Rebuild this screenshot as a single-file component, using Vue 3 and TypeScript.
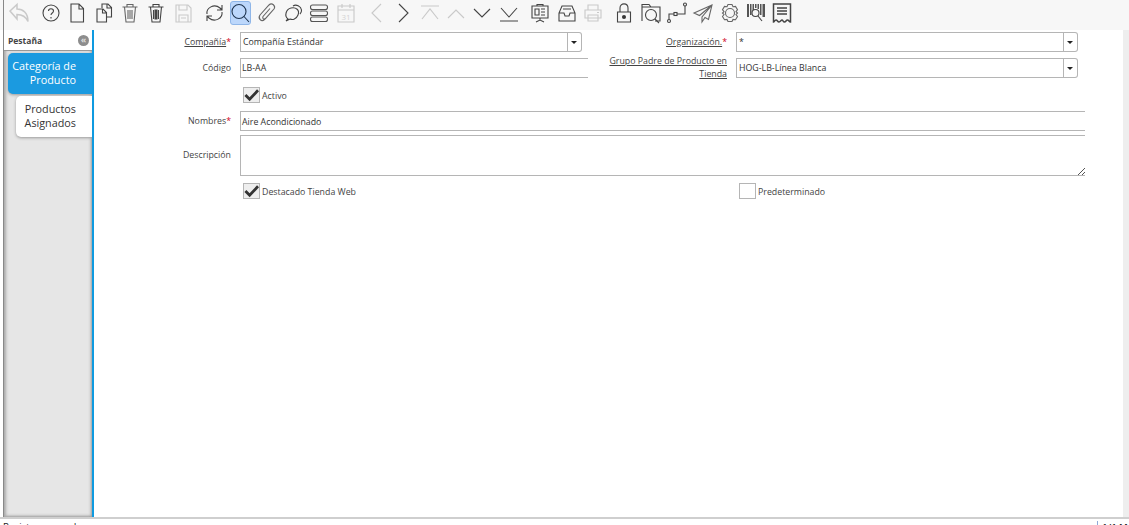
<template>
  <div class="window">
    <header class="toolbar">
      <button
        v-for="tool in tools"
        :key="tool.name"
        class="tool"
        :class="{ active: tool.active, off: tool.off, gap: tool.gap }"
        :title="tool.name"
      >
        <svg viewBox="0 0 24 24" width="24" height="24" v-html="tool.svg"></svg>
      </button>
    </header>

    <div class="main">
      <aside class="side">
        <div class="side-head">
          <span>Pestaña</span>
          <i class="collapse">«</i>
        </div>
        <div class="side-body">
          <div class="tab current">Categoría de<br />Producto</div>
          <div class="tab">Productos<br />Asignados</div>
        </div>
      </aside>

      <main class="content">
        <form class="form">
          <label class="lbl"><u>Compañía</u><em>*</em></label>
          <div class="combo">
            <span class="val">Compañía Estándar</span>
            <span class="arrow"></span>
          </div>
          <label class="lbl"><u>Organización.</u><em>*</em></label>
          <div class="combo">
            <span class="val">*</span>
            <span class="arrow"></span>
          </div>

          <label class="lbl">Código</label>
          <div class="field">LB-AA</div>
          <label class="lbl two"><u>Grupo Padre de Producto en Tienda</u></label>
          <div class="combo">
            <span class="val">HOG-LB-Línea Blanca</span>
            <span class="arrow"></span>
          </div>

          <div class="check span3">
            <span class="box">
              <svg viewBox="0 0 16 16" width="16" height="16"><path d="M1.500 8 6 12.500 15 3" fill="none" stroke="#333" stroke-width="3" /></svg>
            </span>
            <span class="cap">Activo</span>
          </div>

          <label class="lbl low">Nombres<em>*</em></label>
          <div class="field wide low">Aire Acondicionado</div>

          <label class="lbl desc">Descripción</label>
          <div class="field wide area">
            <svg class="grip" viewBox="0 0 8 8" width="8" height="8"><path d="M1 8 8 1M5 8 8 5" stroke="#555" stroke-width="1" /></svg>
          </div>

          <div class="check span2">
            <span class="box">
              <svg viewBox="0 0 16 16" width="16" height="16"><path d="M1.500 8 6 12.500 15 3" fill="none" stroke="#333" stroke-width="3" /></svg>
            </span>
            <span class="cap">Destacado Tienda Web</span>
          </div>
          <div class="check last">
            <span class="box empty"></span>
            <span class="cap">Predeterminado</span>
          </div>
        </form>
        <div class="gutter"></div>
      </main>
    </div>

    <footer class="status">
      <span>Registros cargados</span>
      <span class="count">1/1 M</span>
    </footer>
  </div>
</template>

<script setup lang="ts">
interface Tool {
  name: string
  svg: string
  off?: boolean
  active?: boolean
  gap?: boolean
}

const tools: Tool[] = [
  { name: 'Deshacer', off: true, svg: '<path d="M3 10 10 3.500v4.500c6 0 11 4 11 12.500-2-4.500-5-7-11-7V18z" stroke-width="1.500"/>' },
  { name: 'Ayuda', gap: true, svg: '<circle cx="12" cy="12" r="8"/><path d="M9.500 10c0-3 5-3 5 0 0 2-2.500 2-2.500 4M12 16v1.500"/>' },
  { name: 'Nuevo', svg: '<path d="M6 3h8l4.500 4.500V21H6zM14 3v5h4.500"/>' },
  { name: 'Copiar', svg: '<path d="M10 7V3h6l3.500 3.500V16H15M15 3v4h4M5 8h6l3.500 3.500V21H5zM10.500 8v4h4"/>' },
  { name: 'Eliminar', svg: '<path d="M4.500 6h15M9 6V3.500h6V6M6.500 6 8 21h8l1.500-15M10 9v9M12 9v9M14 9v9" stroke="#666"/>' },
  { name: 'Eliminar selección', svg: '<path d="M4.500 6h15M9 6V3.500h6V6M6.500 6 8 21h8l1.500-15M9.500 9v9M14.500 9v9"/><path d="M11 9h2v9h-2z" fill="#444"/>' },
  { name: 'Guardar', off: true, svg: '<path d="M5 4h12l3 3v14H5zM8 4v5h8V4M8 21v-7h9v7M10 17h5"/>' },
  { name: 'Refrescar', gap: true, svg: '<path d="M5 13c-1-6 7-11 13-6l1.500 1.500M20 11c1 6-7 11-13 6l-1.500-1.500M20 4v5h-5M5 20v-5h5"/>' },
  { name: 'Buscar', active: true, svg: '<circle cx="11" cy="10.500" r="7"/><path d="M16 15.500 21 21"/>' },
  { name: 'Adjunto', svg: '<path d="M18 9 9.500 18.500c-3 3-7-1-4.500-4.500L14 4c3-3 7 1 5 4l-8.500 9.500c-1.500 1.500-3.500 0-2.500-2l7-8" stroke="#666"/>' },
  { name: 'Chat', svg: '<path d="M7 18c-4-3-2-10 3-11s9 2 7 7-6 5-8 4l-4 2z"/><path d="M12 5c3-2 8 0 8.500 4 .2 2-.5 3-1.500 4"/>' },
  { name: 'Detalle', svg: '<rect x="3.500" y="4" width="17" height="4.500" rx="2" stroke="#555"/><rect x="3.500" y="10" width="17" height="4.500" rx="2" stroke="#555"/><rect x="3.500" y="16" width="17" height="4.500" rx="2" stroke="#555"/>' },
  { name: 'Calendario', off: true, svg: '<path d="M4 5h16v16H4zM4 9h16M8 3v4M16 3v4"/><text x="12" y="19" font-size="8" font-family="Open Sans" text-anchor="middle" stroke="none" fill="#666">31</text>' },
  { name: 'Anterior', off: true, gap: true, svg: '<path d="M16 3 7 12l9 9"/>' },
  { name: 'Siguiente', svg: '<path d="M8 3l9 9-9 9"/>' },
  { name: 'Primero', off: true, svg: '<path d="M3 5h18M4 18 12 8l8 10"/>' },
  { name: 'Subir', off: true, svg: '<path d="M4 17l8-8 8 8"/>' },
  { name: 'Bajar', svg: '<path d="M4 8l8 8 8-8"/>' },
  { name: 'Último', svg: '<path d="M4 7l8 9 8-9M3 20h18"/>' },
  { name: 'Informe', gap: true, svg: '<path d="M4 5h16v12H4zM9 5V3.500h6V5M12 17v2M8 21l4-2 4 2M7 8h4v6H7zM13 8h4M13 11h4M13 14h4"/>' },
  { name: 'Archivo', svg: '<path d="M7 5h10l3 7v8H4v-8zM4 12h5l1 3h4l1-3h5M8 8h8"/>' },
  { name: 'Imprimir', off: true, svg: '<path d="M7 9V4h10v5M4 9h16v8H4zM7 14h10v6H7zM16 11.500h2"/>' },
  { name: 'Bloquear', gap: true, svg: '<path d="M5.500 11h13v10h-13zM8 11V7c0-5.500 8-5.500 8 0v4"/><circle cx="12" cy="16" r="1.500" fill="#333"/>' },
  { name: 'Zoom', svg: '<path d="M3 20V3.500h7l2 2.500h9v14H16M3 6h9"/><circle cx="12" cy="14" r="5.500"/><path d="M16 18l4 4"/>' },
  { name: 'Flujo', svg: '<circle cx="4" cy="20" r="1.500"/><circle cx="20" cy="3.500" r="1.500"/><rect x="9" y="11.500" width="3" height="3"/><path d="M4 18.500V13h5M12 13h8V5"/>' },
  { name: 'Enviar', svg: '<path d="M21 4 3 12l5.500 2.500L21 4 11 16v5l3-4.500 3.500 2z" stroke="#666"/>' },
  { name: 'Preferencias', svg: '<circle cx="12" cy="12" r="4.500" stroke="#666"/><path stroke="#666" d="M10 3.500h4l1 2.200 2.500-.3 2 3.200-1.500 2L19.500 12l-1.500 1.500 1.500 2-2 3.200-2.500-.3-1 2.100h-4l-1-2.100-2.500.3-2-3.200 1.500-2L4.500 12 6 10.600l-1.500-2 2-3.200 2.500.3z"/>' },
  { name: 'Código de barras', svg: '<path d="M3 3h2v13H3zM6 3h1.500v11H6zM8.500 3h1.500v6H8.500zM11 3h1.500v4H11zM13.500 3h1.500v5h-1.500zM16 3h1.500v11H16zM18.500 3H21v13h-2.500z" fill="#555" stroke="none"/><circle cx="11.500" cy="12" r="3.500"/><path d="M14 15l4 5"/>' },
  { name: 'Recibo', svg: '<path d="M3.500 3h17v18c-1.500 0-1.500-2-3-2s-1.500 2-3 2-1.500-2-2.500-2-1.500 2-3 2-1.500-2-3-2-1.500 2-2.500 2zM7 7h10M7 10h10M7 13h10" stroke-width="1.500"/>' },
]
</script>

<style scoped>
.window {
  width: 1129px;
  height: 525px;
  display: flex;
  flex-direction: column;
  overflow: hidden;
  background: #fff;
  font-family: 'Open Sans', 'Liberation Sans', sans-serif;
  font-size: 8.800px;
  color: #333;
}

.toolbar {
  height: 30px;
  flex: none;
  display: flex;
  align-items: flex-start;
  padding: 1px 0 0 3px;
  background: #f7f7f7;
  box-sizing: border-box;
}

.toolbar::before {
  content: '';
  width: 1px;
  height: 30px;
  margin: -1px 2.300px 0 0;
  background: #888;
  flex: none;
}

.tool {
  width: 26.300px;
  height: 24px;
  flex: none;
  padding: 0;
  border: 1px solid transparent;
  border-radius: 3px;
  background: none;
  display: flex;
  align-items: center;
  justify-content: center;
  box-sizing: border-box;
}

.tool svg {
  flex: none;
  fill: none;
  stroke: #444;
  stroke-width: 1.100;
}

.tool.gap {
  margin-left: 5.300px;
}

.tool.off svg {
  opacity: 0.25;
}

.tool.active {
  width: 21px;
  margin: 0 2.650px;
  background: #bcd7fb;
  border-color: #8fb6e8;
}

.tool.active svg {
  stroke: #1f3550;
}

.main {
  height: 487px;
  flex: none;
  display: flex;
  border-bottom: 2px solid #cfcfcf;
  box-sizing: content-box;
}

.side {
  width: 88px;
  margin-left: 3px;
  flex: none;
  display: flex;
  flex-direction: column;
  border-left: 1px solid #888;
  box-sizing: content-box;
}

.side-head {
  height: 20px;
  display: flex;
  align-items: center;
  justify-content: space-between;
  padding: 0 3px 0 4px;
  font-size: 8.500px;
  font-weight: 700;
  color: #444;
  background: #fff;
  border-bottom: 1px solid #999;
}

.collapse {
  width: 11px;
  height: 11px;
  border-radius: 50%;
  background: #8d8d8d;
  color: #ddd;
  font-style: normal;
  font-size: 9px;
  line-height: 10px;
  text-align: center;
}

.side-body {
  flex: 1;
  display: flex;
  flex-direction: column;
  align-items: flex-end;
  padding-top: 2px;
  background: #e6e6e6;
  box-shadow: inset 3px 0 3px -1px #aaa, inset -3px -3px 3px -2px #999;
}

.tab {
  width: 76px;
  height: 41px;
  box-sizing: border-box;
  padding: 6px 16px 0 0;
  border-radius: 5px 0 0 5px;
  background: #fff;
  font-size: 10.800px;
  line-height: 14px;
  text-align: right;
  white-space: nowrap;
  color: #333;
  box-shadow: 0 1px 3px #999;
}

.tab.current {
  width: 84px;
  background: #1b9ae0;
  color: #fff;
  margin-bottom: 2px;
  font-weight: 500;
}

.content {
  flex: 1;
  display: flex;
  border-left: 2px solid #0e9ae0;
}

.form {
  flex: none;
  align-self: flex-start;
  display: grid;
  grid-template-columns: 137px 348px 130px 349px;
  grid-template-rows: 26px 29px 24px 24px 48px 16px;
  column-gap: 9px;
  padding-top: 2px;
}

.lbl {
  display: flex;
  align-items: center;
  justify-content: flex-end;
  height: 20px;
  text-align: right;
  line-height: 13px;
  color: #444;
  white-space: nowrap;
}

.lbl.two {
  white-space: normal;
}

.lbl.desc {
  align-items: flex-start;
  padding-top: 14px;
  box-sizing: border-box;
}

.lbl em {
  color: #d0021b;
  font-style: normal;
}

.low {
  padding-top: 1px;
  box-sizing: border-box;
}

.combo,
.field {
  display: flex;
  align-items: center;
  height: 20px;
  box-sizing: border-box;
  padding-left: 1px;
  border: 1px solid #b5b5b5;
  border-right: 0;
  background: #fff;
  color: #333;
}

.combo {
  width: 328px;
  border-right: 1px solid #b5b5b5;
  position: relative;
  padding-left: 2px;
}

.val {
  flex: 1;
}

.arrow {
  position: absolute;
  right: -15px;
  top: -1px;
  width: 14px;
  height: 20px;
  box-sizing: border-box;
  border: 1px solid #b5b5b5;
  border-left: 0;
  border-radius: 0 3px 3px 0;
  background: #fff;
}

.arrow::after {
  content: '';
  position: absolute;
  left: 3px;
  top: 8px;
  border: 3px solid transparent;
  border-top: 3px solid #222;
}

.field.wide {
  grid-column: 2 / 5;
}

.field.area {
  height: 41px;
  position: relative;
}

.grip {
  position: absolute;
  right: 0;
  bottom: 0;
}

.check {
  display: flex;
  align-items: center;
  gap: 2px;
  height: 16px;
  color: #444;
}

.cap {
  padding-top: 2px;
}

.span3 {
  grid-column: 2 / 5;
  margin-left: 3px;
}

.span2 {
  grid-column: 2 / 4;
  margin-left: 3px;
}

.last {
  margin-left: 3px;
}

.box {
  width: 17px;
  height: 16px;
  flex: none;
  box-sizing: border-box;
  border: 1px solid #b5b5b5;
  background: #eee;
  display: flex;
  align-items: center;
  justify-content: center;
}

.box.empty {
  background: #fff;
}

.gutter {
  width: 6px;
  margin-left: auto;
  background: #eee;
}

.status {
  height: 6px;
  flex: none;
  display: flex;
  justify-content: space-between;
  align-items: flex-start;
  padding: 2px 0 0 3px;
  font-size: 9.500px;
  line-height: 12px;
  color: #222;
  overflow: hidden;
  box-sizing: border-box;
}

.count {
  border-left: 1px solid #8fa8d8;
  padding-left: 4px;
  font-weight: 600;
  width: 27px;
}
</style>

<style>
html,
body {
  margin: 0;
  background: #fff;
}
</style>
